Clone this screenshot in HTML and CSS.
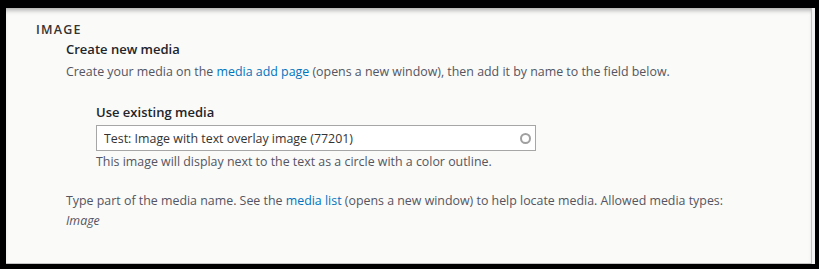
FILE: index.html
```html
<!DOCTYPE html>
<html lang="en">
<head>
  <meta charset="UTF-8" />
  <title>Image field</title>
  <link rel="stylesheet" href="styles.css">
</head>
<body>
  <div class="frame">
    <div class="panel">
      <fieldset class="field-group">
        <legend class="group-title">Image</legend>
        <div class="group-body">
          <h3 class="sub-title">Create new media</h3>
          <p class="desc">Create your media on the <a href="#">media add page</a> (opens a new window), then add it by name to the field below.</p>

          <div class="form-item">
            <label for="media">Use existing media</label>
            <div class="autocomplete">
              <input type="text" id="media" value="Test: Image with text overlay image (77201)">
              <span class="throbber"></span>
            </div>
            <p class="desc">This image will display next to the text as a circle with a color outline.</p>
          </div>

          <p class="desc help">Type part of the media name. See the <a href="#">media list</a> (opens a new window) to help locate media. Allowed media types: <em>Image</em></p>
        </div>
      </fieldset>
    </div>
  </div>
</body>
</html>
```

FILE: styles.css
```css
* {
  margin: 0;
  padding: 0;
  box-sizing: border-box;
}

body {
  background: #fff;
  font-family: 'Open Sans', 'Liberation Sans', sans-serif;
  color: #545560;
}

.frame {
  width: 819px;
  height: 269px;
  background: #000;
  padding: 8px 7px 5px 6px;
}

.panel {
  height: 100%;
  background: #fafaf9;
  border-right: 1px solid #c4c4c4;
  border-bottom: 1px solid #c4c4c4;
  box-shadow: inset 0 5px 5px -3px rgba(0, 0, 0, 0.35), 3px 0 0 #f2f2f2;
  padding: 13px 0 0 30px;
}

.field-group {
  border: none;
}

.group-title {
  font-size: 12.5px;
  font-weight: 600;
  letter-spacing: 1.2px;
  text-transform: uppercase;
  color: #333;
  line-height: 18px;
}

.group-body {
  padding-left: 30px;
}

.sub-title {
  font-size: 13px;
  font-weight: 600;
  color: #232429;
  line-height: 20px;
}

.desc {
  font-size: 12.4px;
  line-height: 20px;
  margin-top: 3px;
}

.desc a {
  color: #0074bd;
  text-decoration: none;
}

.form-item {
  padding-left: 30px;
  margin-top: 20px;
}

.form-item label {
  display: block;
  font-size: 13px;
  font-weight: 600;
  color: #232429;
  line-height: 20px;
  margin-bottom: 3px;
}

.autocomplete {
  position: relative;
  width: 440px;
}

.autocomplete input {
  width: 100%;
  height: 26px;
  border: 1px solid #a6a6a6;
  background: #fff;
  font-family: inherit;
  font-size: 12.4px;
  color: #333;
  padding: 0 28px 0 7px;
}

.throbber {
  position: absolute;
  right: 5px;
  top: 8px;
  width: 11px;
  height: 11px;
  border: 2px solid #a0a0a0;
  border-radius: 50%;
}

.form-item .desc {
  margin-top: 1px;
}

.help {
  margin-top: 19px;
  max-width: 680px;
}
```
